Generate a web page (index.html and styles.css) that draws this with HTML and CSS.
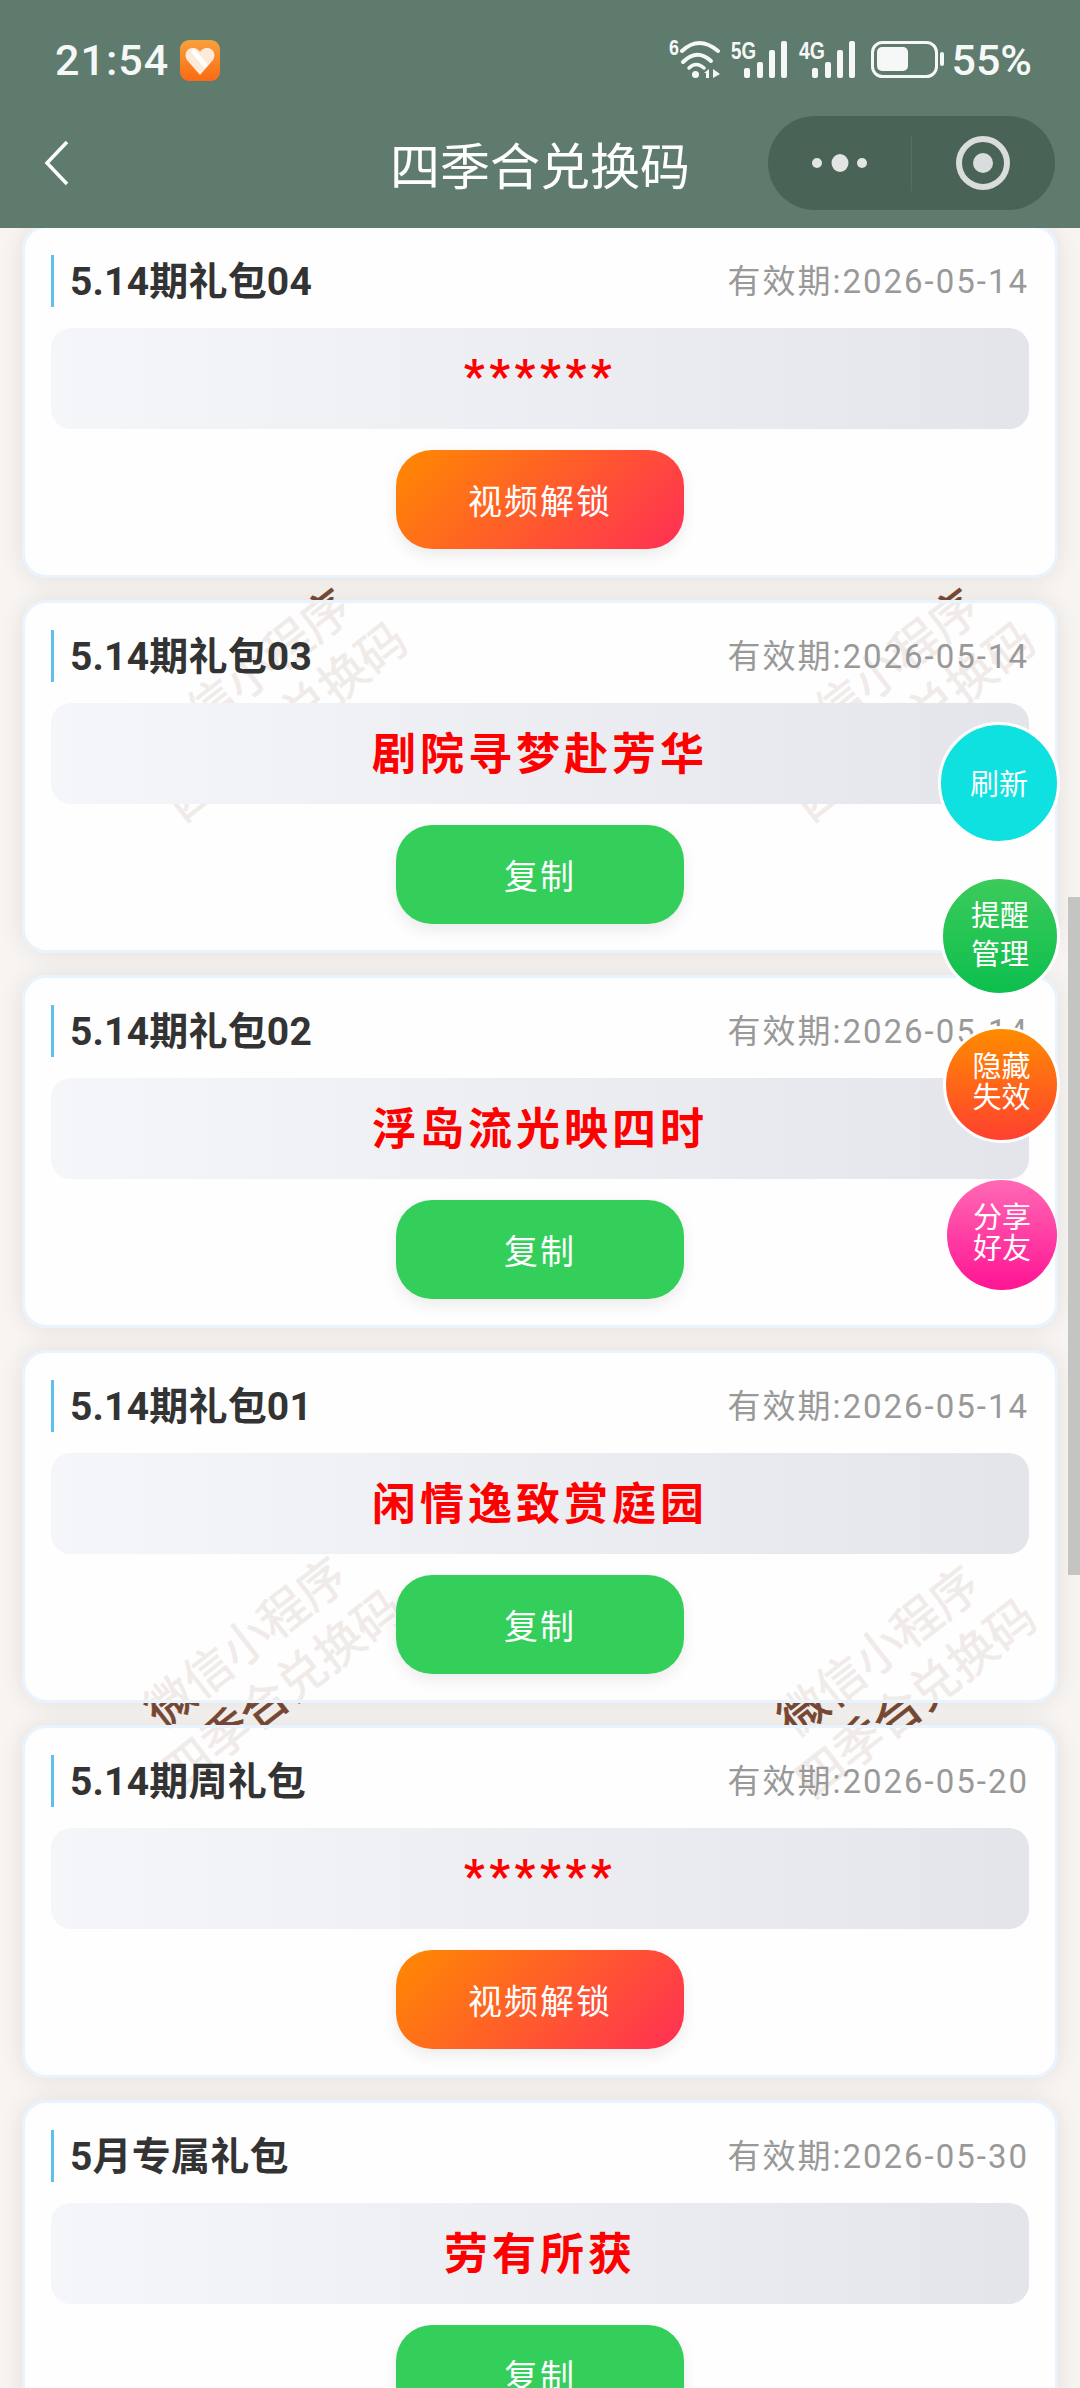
FILE: index.html
```html
<!DOCTYPE html>
<html lang="zh-CN">
<head>
    <meta charset="UTF-8">
    <meta name="viewport" content="width=device-width, initial-scale=1.0">
    <title>四季合兑换码</title>
    <link rel="stylesheet" href="styles.css">
</head>
<body>
    <div class="page">
        <div class="mark mark-a"><span>微信小程序</span><span>四季合兑换码</span></div>
        <div class="mark mark-b"><span>微信小程序</span><span>四季合兑换码</span></div>
        <div class="mark mark-c"><span>微信小程序</span><span>四季合兑换码</span></div>
        <div class="mark mark-d"><span>微信小程序</span><span>四季合兑换码</span></div>

        <header class="header">
            <div class="status">
                <div class="status-left">
                    <span class="time">21:54</span>
                    <svg class="app-icon" width="40" height="41" viewBox="0 0 40 41">
                        <defs>
                            <linearGradient id="appFill" x1="0" y1="0" x2="0" y2="1">
                                <stop offset="0" stop-color="#f7a13c"/>
                                <stop offset="1" stop-color="#fb6a12"/>
                            </linearGradient>
                        </defs>
                        <rect width="40" height="41" rx="9" fill="url(#appFill)"/>
                        <path d="M20 35 L7 20 C3 13 8 7 14 8 C17 8.500 19 10 20 12 C21 10 23 8.500 26 8 C32 7 37 13 33 20 Z" fill="#fdeadb"/>
                        <path d="M14 12 L25 25" stroke="#fff" stroke-width="5" stroke-linecap="round"/>
                    </svg>
                </div>
                <div class="status-right">
                    <svg width="285" height="50" viewBox="665 35 285 50" fill="#f6f8f7">
                        <text class="net" x="671" y="55" font-size="22" textLength="10" lengthAdjust="spacingAndGlyphs">6</text>
                        <g fill="none" stroke="#f6f8f7" stroke-linecap="round">
                            <path d="M684 51 Q701 35 720 51" stroke-width="4"/>
                            <path d="M685 62 Q699 48 713 61" stroke-width="4"/>
                            <path d="M691 68 Q698 61 706 68" stroke-width="3.500"/>
                        </g>
                        <circle cx="697.500" cy="74.500" r="3.500"/>
                        <path d="M711 69 L711 78 L708 78 L708 73 L706 73 Z M715 69 L722 74 L715 78 Z"/>
                        <text class="net" x="733" y="59" font-size="24" textLength="25" lengthAdjust="spacingAndGlyphs">5G</text>
                        <rect x="746" y="68" width="6" height="10" rx="2"/>
                        <rect x="759" y="62" width="6" height="16" rx="2"/>
                        <rect x="771" y="50" width="6" height="28" rx="2"/>
                        <rect x="783" y="41" width="6" height="37" rx="2"/>
                        <text class="net" x="801" y="59" font-size="24" textLength="26" lengthAdjust="spacingAndGlyphs">4G</text>
                        <rect x="814" y="68" width="6" height="10" rx="2"/>
                        <rect x="827" y="62" width="6" height="16" rx="2"/>
                        <rect x="839" y="50" width="6" height="28" rx="2"/>
                        <rect x="851" y="41" width="6" height="37" rx="2"/>
                        <rect x="874.500" y="42.500" width="64" height="34" rx="10" fill="none" stroke="#f6f8f7" stroke-width="3"/>
                        <rect x="879" y="47" width="31" height="24" rx="5"/>
                        <rect x="942" y="52" width="4" height="14" rx="2"/>
                    </svg>
                    <span class="percent">55%</span>
                </div>
            </div>
            <div class="nav">
                <svg class="back" width="26" height="46" viewBox="0 0 26 46">
                    <path d="M23 2 L3 23 L23 44" fill="none" stroke="#fff" stroke-width="3.500"/>
                </svg>
                <div class="nav-title">四季合兑换码</div>
                <div class="capsule">
                    <div class="capsule-side">
                        <svg width="60" height="24" viewBox="0 0 60 24" fill="#e1e5e3">
                            <circle cx="7" cy="12" r="5"/>
                            <ellipse cx="30" cy="12" rx="8.500" ry="9"/>
                            <circle cx="52" cy="12" r="5"/>
                        </svg>
                    </div>
                    <div class="capsule-side">
                        <svg width="56" height="56" viewBox="0 0 56 56">
                            <circle cx="28" cy="28" r="24" fill="none" stroke="#d9dddb" stroke-width="6"/>
                            <circle cx="28" cy="28" r="10" fill="#d9dddb"/>
                        </svg>
                    </div>
                </div>
            </div>
        </header>

        <main class="list">
            <section class="card">
                <div class="card-head">
                    <div class="card-title">5.14期礼包04</div>
                    <div class="card-date">有效期:2026-05-14</div>
                </div>
                <div class="code"><span class="stars">******</span></div>
                <div class="btn btn-video">视频解锁</div>
            </section>
            <section class="card">
                <div class="card-head">
                    <div class="card-title">5.14期礼包03</div>
                    <div class="card-date">有效期:2026-05-14</div>
                </div>
                <div class="code"><span class="code-text">剧院寻梦赴芳华</span></div>
                <div class="btn btn-copy">复制</div>
            </section>
            <section class="card">
                <div class="card-head">
                    <div class="card-title">5.14期礼包02</div>
                    <div class="card-date">有效期:2026-05-14</div>
                </div>
                <div class="code"><span class="code-text">浮岛流光映四时</span></div>
                <div class="btn btn-copy">复制</div>
            </section>
            <section class="card">
                <div class="card-head">
                    <div class="card-title">5.14期礼包01</div>
                    <div class="card-date">有效期:2026-05-14</div>
                </div>
                <div class="code"><span class="code-text">闲情逸致赏庭园</span></div>
                <div class="btn btn-copy">复制</div>
            </section>
            <section class="card">
                <div class="card-head">
                    <div class="card-title">5.14期周礼包</div>
                    <div class="card-date">有效期:2026-05-20</div>
                </div>
                <div class="code"><span class="stars">******</span></div>
                <div class="btn btn-video">视频解锁</div>
            </section>
            <section class="card">
                <div class="card-head">
                    <div class="card-title">5月专属礼包</div>
                    <div class="card-date">有效期:2026-05-30</div>
                </div>
                <div class="code"><span class="code-text">劳有所获</span></div>
                <div class="btn btn-copy">复制</div>
            </section>
        </main>

        <div class="floats">
            <div class="float float-refresh">刷新</div>
            <div class="float float-remind">提醒<br>管理</div>
            <div class="float float-hide">隐藏<br>失效</div>
            <div class="float float-share">分享<br>好友</div>
        </div>

        <div class="scrollbar"></div>
    </div>
</body>
</html>
```

FILE: styles.css
```css
* {
    box-sizing: border-box;
}
body {
    margin: 0;
    font-family: Roboto, "Noto Sans CJK SC", sans-serif;
    background-color: #f7f4f1;
}
.page {
    position: relative;
    width: 1080px;
    height: 2388px;
    overflow: hidden;
}

/* watermark sits behind the see-through cards */
.mark {
    position: absolute;
    width: 340px;
    display: flex;
    flex-direction: column;
    align-items: center;
    font-size: 48px;
    line-height: 60px;
    color: #7a4a35;
    -webkit-text-stroke: 0.800px #7a4a35;
    transform: rotate(-38deg);
}
.mark-a {
    left: 99px;
    top: 639px;
}
.mark-b {
    left: 727px;
    top: 639px;
}
.mark-c {
    left: 95px;
    top: 1607px;
}
.mark-d {
    left: 728px;
    top: 1616px;
}

.header {
    position: relative;
    z-index: 2;
    height: 228px;
    background-color: #5e7b6d;
}
.status {
    display: flex;
    justify-content: space-between;
    align-items: center;
    height: 116px;
    padding: 4px 48px 0 55px;
    color: #f6f8f7;
}
.status-left {
    display: flex;
    align-items: center;
    gap: 11px;
}
.status-right {
    display: flex;
    align-items: center;
    gap: 3px;
}
.time {
    font-size: 43px;
    font-weight: 500;
    letter-spacing: 1px;
}
.percent {
    font-size: 43px;
    font-weight: 500;
}
.net {
    font-family: "Liberation Sans", sans-serif;
    font-weight: bold;
}
.nav {
    display: grid;
    grid-template-columns: 1fr auto 1fr;
    align-items: center;
    height: 94px;
    padding: 0 25px;
}
.back {
    margin-left: 19px;
}
.nav-title {
    font-size: 50px;
    color: #fff;
}
.capsule {
    justify-self: end;
    display: flex;
    width: 287px;
    height: 94px;
    border-radius: 47px;
    background-color: #4a6357;
}
.capsule-side {
    display: flex;
    justify-content: center;
    align-items: center;
    width: 50%;
}
.capsule-side:first-child {
    position: relative;
}
.capsule-side:first-child::after {
    content: "";
    position: absolute;
    right: 0;
    top: 19px;
    bottom: 19px;
    width: 1px;
    background-color: rgba(255, 255, 255, 0.08);
}

.list {
    position: relative;
    z-index: 1;
    display: flex;
    flex-direction: column;
    gap: 22px;
    margin-top: -3px;
    padding: 0 22px;
}
.card {
    flex: none;
    height: 353px;
    padding: 27px 26px 26px;
    background-color: rgba(255, 255, 255, 0.89);
    border: 3px solid #e9f3fe;
    border-radius: 24px;
    box-shadow: 0 0 24px rgba(0, 0, 0, 0.09);
}
.card-head {
    display: flex;
    justify-content: space-between;
    align-items: center;
    height: 52px;
}
.card-title {
    padding-left: 16px;
    border-left: 3px solid #5fc0ec;
    font-size: 39px;
    line-height: 54px;
    height: 52px;
    font-weight: bold;
    letter-spacing: 0.200px;
    color: #333;
}
.card-date {
    font-size: 33px;
    letter-spacing: 2px;
    line-height: 54px;
    height: 52px;
    color: #999;
}
.code {
    display: flex;
    justify-content: center;
    align-items: center;
    height: 101px;
    margin-top: 21px;
    border-radius: 20px;
    background: linear-gradient(90deg, #f5f6fa, #e3e5ea);
    font-size: 44px;
    font-weight: bold;
    letter-spacing: 4px;
    color: #f00;
}
.code-text {
    margin-bottom: 5px;
}
.stars {
    font-size: 46px;
    letter-spacing: 4.500px;
    margin-bottom: 5px;
}
.btn {
    display: flex;
    justify-content: center;
    align-items: center;
    width: 288px;
    height: 99px;
    margin: 21px auto 0;
    border-radius: 36px;
    font-size: 34px;
    letter-spacing: 2px;
    color: #fff;
    box-shadow: 0 6px 16px rgba(0, 0, 0, 0.08);
}
.btn-copy {
    background-color: #34ce5b;
}
.btn-video {
    background: linear-gradient(135deg, #ff8a00, #ff2f55);
}

.floats {
    position: absolute;
    z-index: 3;
    top: 722px;
    right: 20px;
    display: flex;
    flex-direction: column;
    align-items: flex-end;
}
.float {
    display: flex;
    justify-content: center;
    align-items: center;
    text-align: center;
    border: 3px solid #fff;
    border-radius: 50%;
    padding-bottom: 3px;
    font-size: 29px;
    color: #fff;
}
.float-refresh {
    width: 122px;
    height: 122px;
    background-color: #0fe0e0;
}
.float-remind {
    width: 120px;
    height: 120px;
    margin-top: 32px;
    padding-bottom: 0;
    line-height: 39px;
    background: linear-gradient(180deg, #3ccb5a, #0dbf4e);
}
.float-hide {
    width: 117px;
    height: 117px;
    margin-top: 30px;
    line-height: 31px;
    background: linear-gradient(180deg, #ff8c00, #ff4030);
}
.float-share {
    width: 110px;
    height: 110px;
    margin: 37px 3px 0 0;
    line-height: 31px;
    border: none;
    background: linear-gradient(180deg, #ff69b4, #ff1493);
}

.scrollbar {
    position: absolute;
    z-index: 2;
    top: 897px;
    right: 0;
    width: 12px;
    height: 678px;
    background-color: #c4c4c2;
}
```
